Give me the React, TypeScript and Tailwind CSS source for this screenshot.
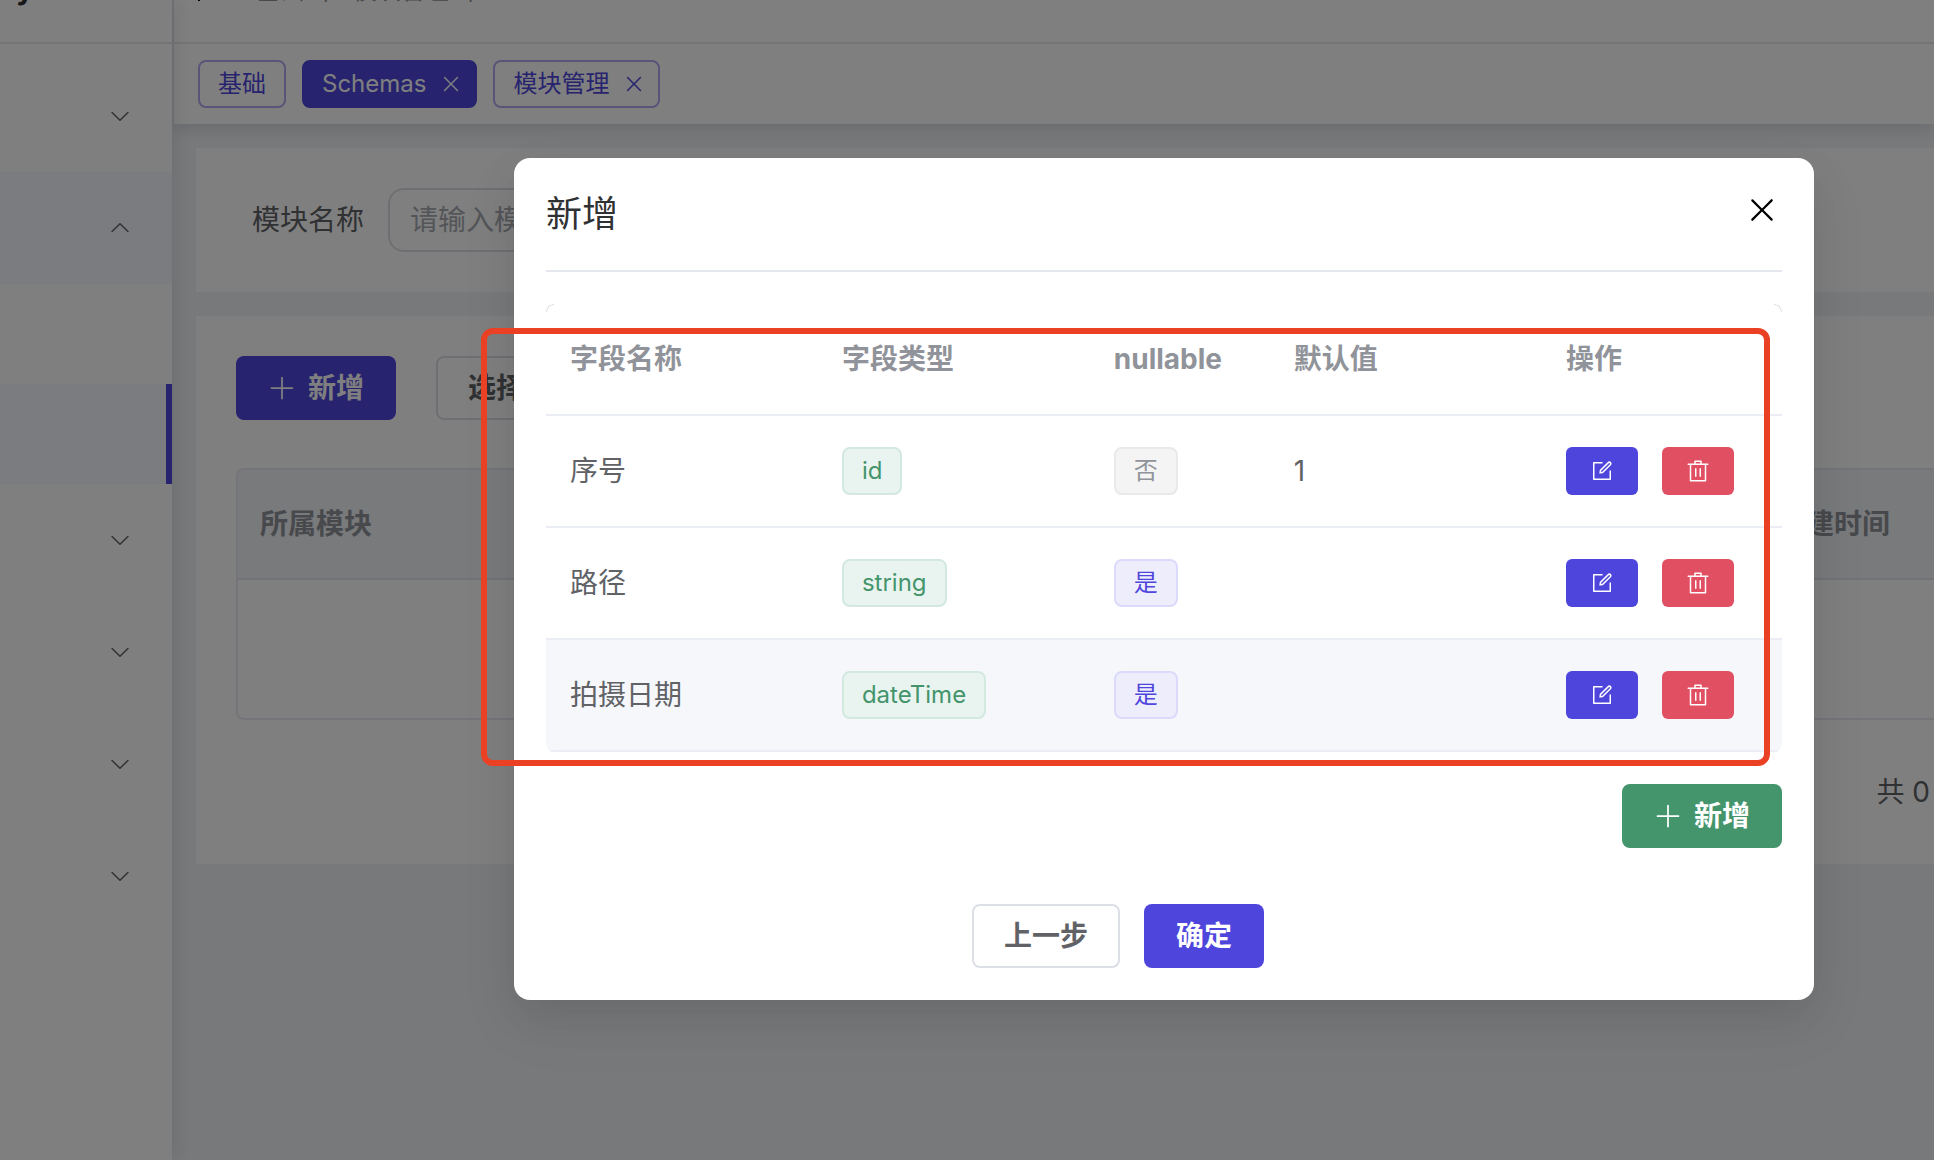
import React from 'react';
import clsx from 'clsx';

interface IconProps {
  size?: number;
  paths: string[];
  className?: string;
}

const Icon: React.FC<IconProps> = ({ size = 24, paths, className }) => (
  <svg width={size} height={size} viewBox="0 0 1024 1024" fill="currentColor" className={clsx('shrink-0', className)} aria-hidden="true">
    {paths.map((d) => (
      <path key={d} d={d} />
    ))}
  </svg>
);

const icons = {
  down: ['M831.872 340.864 512 652.672 192.128 340.864a30.592 30.592 0 0 0-42.752 0 29.12 29.12 0 0 0 0 41.6L489.664 714.24a32 32 0 0 0 44.672 0l340.288-331.712a29.12 29.12 0 0 0 0-41.728 30.592 30.592 0 0 0-42.752 0z'],
  close: ['M764.288 214.592 512 466.88 259.712 214.592a31.936 31.936 0 0 0-45.12 45.12L466.752 512 214.528 764.224a31.936 31.936 0 1 0 45.12 45.184L512 557.184l252.288 252.288a31.936 31.936 0 0 0 45.12-45.12L557.12 512.064l252.288-252.352a31.936 31.936 0 1 0-45.12-45.184z'],
  plus: ['M480 480V128a32 32 0 0 1 64 0v352h352a32 32 0 1 1 0 64H544v352a32 32 0 1 1-64 0V544H128a32 32 0 0 1 0-64h352z'],
  edit: [
    'M832 512a32 32 0 1 1 64 0v352a32 32 0 0 1-32 32H160a32 32 0 0 1-32-32V160a32 32 0 0 1 32-32h352a32 32 0 0 1 0 64H192v640h640V512z',
    'm469.952 554.24 52.8-7.552L847.104 222.4a32 32 0 1 0-45.248-45.248L477.44 501.44l-7.552 52.8zm422.4-422.4a96 96 0 0 1 0 135.808l-331.84 331.84a32 32 0 0 1-18.112 9.088L436.8 623.68a32 32 0 0 1-36.224-36.224l15.104-105.6a32 32 0 0 1 9.024-18.112l331.904-331.84a96 96 0 0 1 135.744 0z',
  ],
  trash: ['M160 256H96a32 32 0 0 1 0-64h256V95.936a32 32 0 0 1 32-32h256a32 32 0 0 1 32 32V192h256a32 32 0 1 1 0 64h-64v672a32 32 0 0 1-32 32H192a32 32 0 0 1-32-32V256zm448-64v-64H416v64h192zM224 896h576V256H224v640zm192-128a32 32 0 0 1-32-32V416a32 32 0 0 1 64 0v320a32 32 0 0 1-32 32zm192 0a32 32 0 0 1-32-32V416a32 32 0 0 1 64 0v320a32 32 0 0 1-32 32z'],
};

type TagType = 'success' | 'info' | 'primary';

const tagStyles: Record<TagType, string> = {
  success: 'border-[#d3e9e0] bg-[#e9f4f0] text-[#44946c]',
  info: 'border-[#e9e9eb] bg-[#f4f4f5] text-[#909399]',
  primary: 'border-[#dcdafa] bg-[#eeedfc] text-[#4e46dc]',
};

const Tag: React.FC<{ type: TagType; children: React.ReactNode }> = ({ type, children }) => (
  <span className={clsx('inline-flex h-12 items-center rounded-lg border-2 px-[18px] text-2xl', tagStyles[type])}>
    {children}
  </span>
);

interface Field {
  name: string;
  type: string;
  nullable: boolean;
  defaultValue: string;
}

const fields: Field[] = [
  { name: '序号', type: 'id', nullable: false, defaultValue: '1' },
  { name: '路径', type: 'string', nullable: true, defaultValue: '' },
  { name: '拍摄日期', type: 'dateTime', nullable: true, defaultValue: '' },
];

const MenuGroup: React.FC<{ open?: boolean }> = ({ open }) => (
  <button
    aria-label="菜单"
    aria-expanded={!!open}
    className={clsx('flex h-28 w-full items-center justify-end pr-10', open && 'bg-[#f6f8ff]')}
  >
    <Icon paths={icons.down} className={open ? 'rotate-180' : ''} />
  </button>
);

const Sidebar: React.FC = () => (
  <aside className="relative z-10 flex w-[172px] shrink-0 flex-col bg-white text-[#606266] shadow-[4px_0_16px_rgba(29,35,41,0.1)]">
    <div className="flex h-11 items-start border-b-2 border-[#e9e9eb] pl-4 text-3xl leading-8 font-bold text-[#303133]">
      <span className="-mt-7">y</span>
    </div>
    <nav className="pt-4">
      <MenuGroup />
      <MenuGroup open />
      <a href="#" aria-label="子菜单" className="block h-[100px]" />
      <a href="#" aria-label="当前菜单" className="block h-[100px] border-r-[6px] border-[#4e46dc] bg-[#f6f8ff]" />
      <MenuGroup />
      <MenuGroup />
      <MenuGroup />
      <MenuGroup />
    </nav>
  </aside>
);

const TopBar: React.FC = () => (
  <header className="border-l-2 border-[#e4e7ed] bg-white shadow-[0_4px_16px_rgba(0,21,41,0.14)]">
    <div className="h-11 overflow-hidden border-b-2 border-[#e9e9eb] pl-6 text-2xl leading-8 text-[#909399]">
      <div className="-mt-[25px] flex gap-5">
        <button aria-label="折叠菜单" className="h-8 w-[38px] text-black">
          <svg width="38" height="32" viewBox="0 0 38 32" fill="none" stroke="currentColor" strokeWidth="2" aria-hidden="true">
            <path d="M1 7v19M8 7h28M8 15h28" />
          </svg>
        </button>
        <span>基础</span>
        <span>/</span>
        <span>模块管理</span>
        <span>/</span>
      </div>
    </div>
    <div className="flex gap-4 px-6 py-4 text-2xl text-[#4e46dc]">
      <button className="flex h-12 items-center rounded-lg border-2 border-[#b4a8f2] px-[18px]">基础</button>
      <button className="flex h-12 items-center gap-[13px] rounded-lg border-2 border-[#4e46dc] bg-[#4e46dc] pr-3 pl-[18px] text-white">
        Schemas
        <Icon paths={icons.close} />
      </button>
      <button className="flex h-12 items-center gap-[13px] rounded-lg border-2 border-[#b4a8f2] pr-3 pl-[18px]">
        模块管理
        <Icon paths={icons.close} />
      </button>
    </div>
  </header>
);

const PageContent: React.FC = () => (
  <main className="flex flex-col gap-6 pt-6 pl-6">
    <section className="flex items-center gap-6 bg-white px-14 py-10">
      <label htmlFor="moduleName" className="text-[#606266]">模块名称</label>
      <input
        id="moduleName"
        placeholder="请输入模块名称"
        className="h-16 w-[400px] rounded-2xl border-2 border-[#dcdfe6] px-5 placeholder:text-[#a8abb2]"
      />
    </section>

    <section className="bg-white py-10 pl-10">
      <div className="flex gap-10 font-bold">
        <button className="flex h-16 items-center gap-3 rounded-lg bg-[#4e46dc] px-8 text-white">
          <Icon paths={icons.plus} size={28} />
          新增
        </button>
        <button className="h-16 rounded-lg border-2 border-[#dcdfe6] px-[30px] text-[#606266]">选择模块</button>
      </div>

      <div className="mt-12 overflow-hidden rounded-l-lg border-y-2 border-l-2 border-[#e9eaf2]">
        <table className="w-full table-fixed border-separate border-spacing-0 text-left">
          <thead className="bg-[#f3f5f8] text-[#909399]">
            <tr className="h-[110px]">
              <th className="border-b-2 border-[#e4e7ed] pl-[22px]">所属模块</th>
              <th className="w-[180px] border-b-2 border-[#e4e7ed] pl-6">创建时间</th>
            </tr>
          </thead>
          <tbody>
            <tr className="h-[138px]">
              <td colSpan={2} />
            </tr>
          </tbody>
        </table>
      </div>

      <div className="mt-10 flex h-16 items-center justify-end pr-1 text-[#606266]">共 0</div>
    </section>
  </main>
);

const FieldTable: React.FC = () => (
  <div className="relative overflow-hidden rounded-lg">
    <span className="absolute top-0 left-0 size-2 rounded-tl-lg border-t border-l border-[#dcdcdc]" />
    <span className="absolute top-0 right-0 size-2 rounded-tr-lg border-t border-r border-[#dcdcdc]" />
    <table className="w-full table-fixed border-separate border-spacing-0 text-left text-[#606266] [&_td]:border-b-2 [&_td]:border-[#ebeef5] [&_td]:pl-6 [&_th]:border-b-2 [&_th]:border-[#ebeef5] [&_th]:pl-6">
      <thead className="text-[#909399]">
        <tr className="h-28">
          <th className="w-[22%]">字段名称</th>
          <th className="w-[22%]">字段类型</th>
          <th className="w-[180px]">nullable</th>
          <th>默认值</th>
          <th className="w-[240px]">操作</th>
        </tr>
      </thead>
      <tbody>
        {fields.map((field, index) => (
          <tr key={field.name} className={clsx('h-28', index === fields.length - 1 && 'bg-[#f5f7fb]')}>
            <td>{field.name}</td>
            <td>
              <div className="flex">
                <Tag type="success">{field.type}</Tag>
              </div>
            </td>
            <td>
              <div className="flex">
                <Tag type={field.nullable ? 'primary' : 'info'}>{field.nullable ? '是' : '否'}</Tag>
              </div>
            </td>
            <td>{field.defaultValue}</td>
            <td>
              <div className="flex gap-6 text-white">
                <button aria-label="编辑" className="flex h-12 w-[72px] items-center justify-center rounded-md bg-[#4e46dc]">
                  <Icon paths={icons.edit} />
                </button>
                <button aria-label="删除" className="flex h-12 w-[72px] items-center justify-center rounded-md bg-[#e15062]">
                  <Icon paths={icons.trash} />
                </button>
              </div>
            </td>
          </tr>
        ))}
      </tbody>
    </table>
  </div>
);

const FieldDialog: React.FC = () => (
  <div
    role="dialog"
    aria-labelledby="dialogTitle"
    className="w-full rounded-2xl bg-white p-8 shadow-[0_24px_64px_8px_rgba(0,0,0,0.04),0_16px_40px_rgba(0,0,0,0.08)]"
  >
    <div className="flex h-[82px] items-start justify-between border-b-2 border-[#e4e7ed]">
      <h2 id="dialogTitle" className="text-4xl leading-12 text-[#303133]">新增</h2>
      <button aria-label="关闭" className="mr-0.5 flex h-10 items-center text-black">
        <Icon paths={icons.close} size={36} />
      </button>
    </div>
    <div className="pt-8">
      <FieldTable />
    </div>
    <div className="flex justify-end pt-8">
      <button className="flex h-16 items-center gap-3 rounded-lg bg-[#44946c] px-8 font-bold text-white">
        <Icon paths={icons.plus} size={28} />
        新增
      </button>
    </div>
    <div className="flex justify-center gap-6 pt-14 pr-[92px] font-bold">
      <button className="h-16 rounded-lg border-2 border-[#dcdfe6] px-[30px] text-[#606266]">上一步</button>
      <button className="h-16 rounded-lg bg-[#4e46dc] px-8 text-white">确定</button>
    </div>
  </div>
);

export default function App() {
  return (
    <div className="relative flex min-h-screen overflow-hidden bg-[#f0f3f6] font-[Inter,'Noto_Sans_CJK_SC',sans-serif] text-[28px] leading-8">
      <Sidebar />
      <div className="min-w-0 flex-1">
        <TopBar />
        <PageContent />
      </div>

      <div className="absolute inset-0 z-20 bg-black/50 pt-[158px] pr-[120px] pl-[514px]">
        <FieldDialog />
      </div>
      {/* highlight around the field list */}
      <div className="pointer-events-none absolute top-[328px] right-[164px] left-[481px] z-30 h-[438px] rounded-xl border-6 border-[#ea4024]" />
    </div>
  );
}
